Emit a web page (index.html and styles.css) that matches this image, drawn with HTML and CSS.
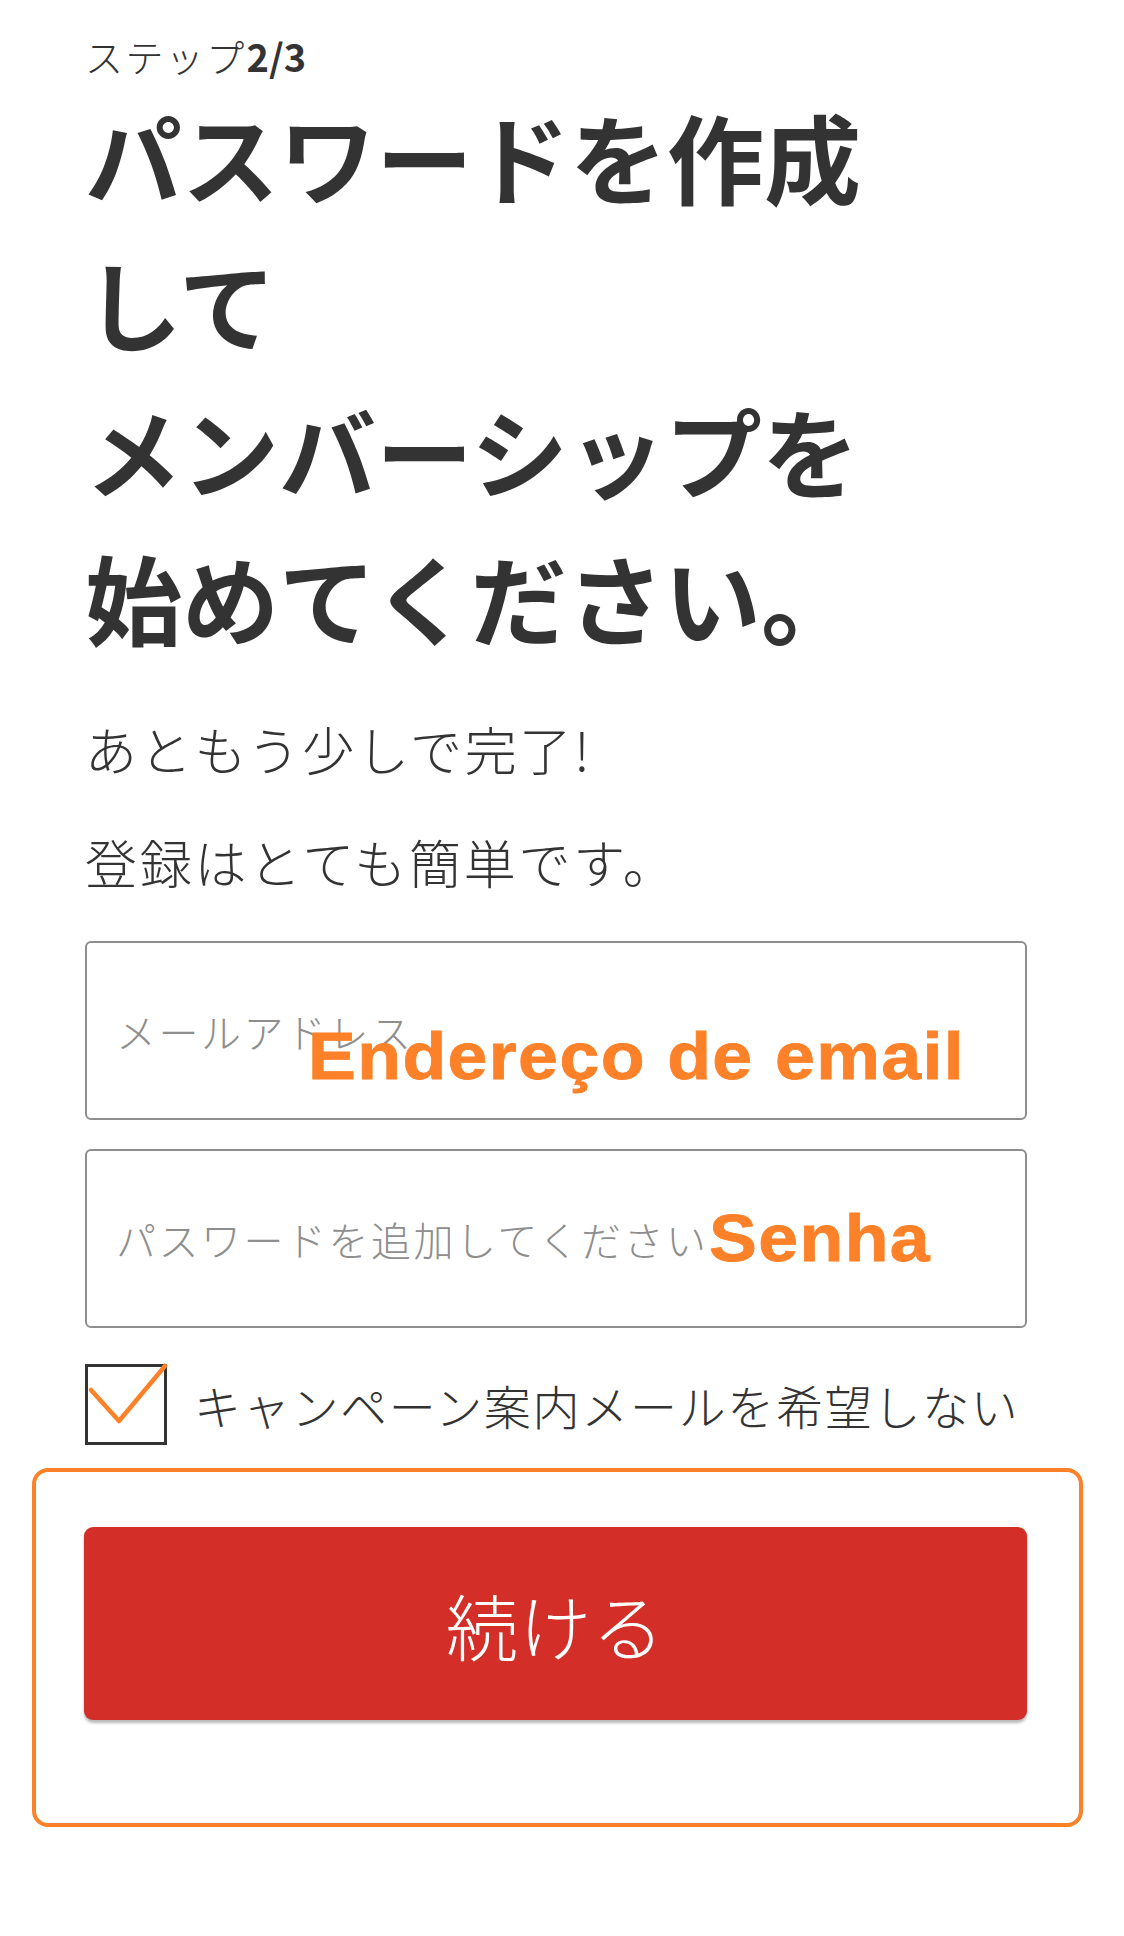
FILE: index.html
```html
<!DOCTYPE html>
<html lang="ja">
<head>
<meta charset="utf-8">
<title>パスワードを作成</title>
<link rel="stylesheet" href="styles.css">
</head>
<body>
<main class="page">
  <p class="step">ステップ<b>2/3</b></p>
  <h1 class="title">パスワードを作成して<br>メンバーシップを始めてください。</h1>
  <p class="lead">あともう少しで完了!</p>
  <p class="lead lead-second">登録はとても簡単です。</p>
  <form class="form">
    <div class="field">
      <input class="input" type="email" placeholder="メールアドレス">
      <span class="note note-email">Endereço de email</span>
    </div>
    <div class="field">
      <input class="input" type="password" placeholder="パスワードを追加してください">
      <span class="note note-pass">Senha</span>
    </div>
    <label class="check-row">
      <span class="checkbox">
        <svg class="check-mark" viewBox="0 0 82 81" aria-hidden="true"><polyline points="6,26 34,57 80,2" fill="none" stroke="#fd8128" stroke-width="4.5" stroke-linecap="round" stroke-linejoin="round"/></svg>
      </span>
      <span class="check-label">キャンペーン案内メールを希望しない</span>
    </label>
    <div class="highlight">
      <button class="submit" type="button">続ける</button>
    </div>
  </form>
</main>
</body>
</html>
```
FILE: styles.css
```css
html, body {
  margin: 0;
  padding: 0;
  background: #ffffff;
}

body {
  font-family: "Noto Sans CJK JP", "Noto Sans", sans-serif;
  color: #333333;
}

.page {
  width: 942px;
  padding: 32px 0 0 85px;
}

.step {
  margin: 0;
  font-size: 38px;
  line-height: 48px;
  font-weight: 300;
  letter-spacing: 2.4px;
}

.step b {
  font-weight: 700;
  letter-spacing: 0;
}

.title {
  margin: 1px 0 0;
  width: 8.6em;
  font-size: 97px;
  line-height: 147px;
  font-weight: 700;
}

.lead {
  margin: 41px 0 0;
  font-size: 52px;
  line-height: 78px;
  font-weight: 300;
  letter-spacing: 2.7px;
}

.lead-second {
  margin-top: 35px;
}

.form {
  margin-top: 40px;
  display: flex;
  flex-direction: column;
}

.field {
  position: relative;
  margin-bottom: 29px;
}

.input {
  display: block;
  box-sizing: border-box;
  width: 100%;
  height: 179px;
  margin: 0;
  padding: 0 29px;
  border: 2.5px solid #8e8e8e;
  border-radius: 6px;
  background: #ffffff;
  font-family: "Noto Sans CJK JP", sans-serif;
  font-size: 40px;
  font-weight: 300;
  letter-spacing: 2.5px;
  color: #333333;
  outline: none;
}

.input::placeholder {
  color: #8e8e8e;
  opacity: 1;
}

.note {
  position: absolute;
  font-family: "Liberation Sans", Arial, sans-serif;
  font-weight: 700;
  font-size: 67px;
  line-height: 1;
  letter-spacing: 1.3px;
  color: #fd8128;
  -webkit-text-stroke: 0.8px #fd8128;
  white-space: nowrap;
  pointer-events: none;
  transform: scaleX(1.07);
  transform-origin: left center;
}

.note-email {
  top: 81px;
  left: 223px;
}

.note-pass {
  top: 55px;
  left: 624px;
}

.check-row {
  display: flex;
  align-items: center;
  gap: 27px;
  margin-top: 7px;
}

.checkbox {
  position: relative;
  flex: none;
  box-sizing: border-box;
  width: 82px;
  height: 81px;
  border: 3px solid #333333;
}

.check-mark {
  position: absolute;
  left: -3px;
  top: -3px;
  width: 82px;
  height: 81px;
  overflow: visible;
}

.check-label {
  font-size: 47px;
  line-height: 60px;
  font-weight: 300;
  letter-spacing: 1.7px;
  white-space: nowrap;
}

.highlight {
  margin: 23px -56px 0 -53px;
  padding: 55px 52px 103px 48px;
  border: 4px solid #fd8128;
  border-radius: 16px;
}

.submit {
  display: block;
  width: 100%;
  height: 193px;
  margin: 0;
  padding: 0;
  border: none;
  border-radius: 9px;
  background: #d32f28;
  box-shadow: 0 3px 3px rgba(0, 0, 0, 0.28);
  color: #ffffff;
  font-family: "Noto Sans CJK JP", sans-serif;
  font-size: 72px;
  font-weight: 300;
  letter-spacing: 1px;
  cursor: pointer;
}
```
